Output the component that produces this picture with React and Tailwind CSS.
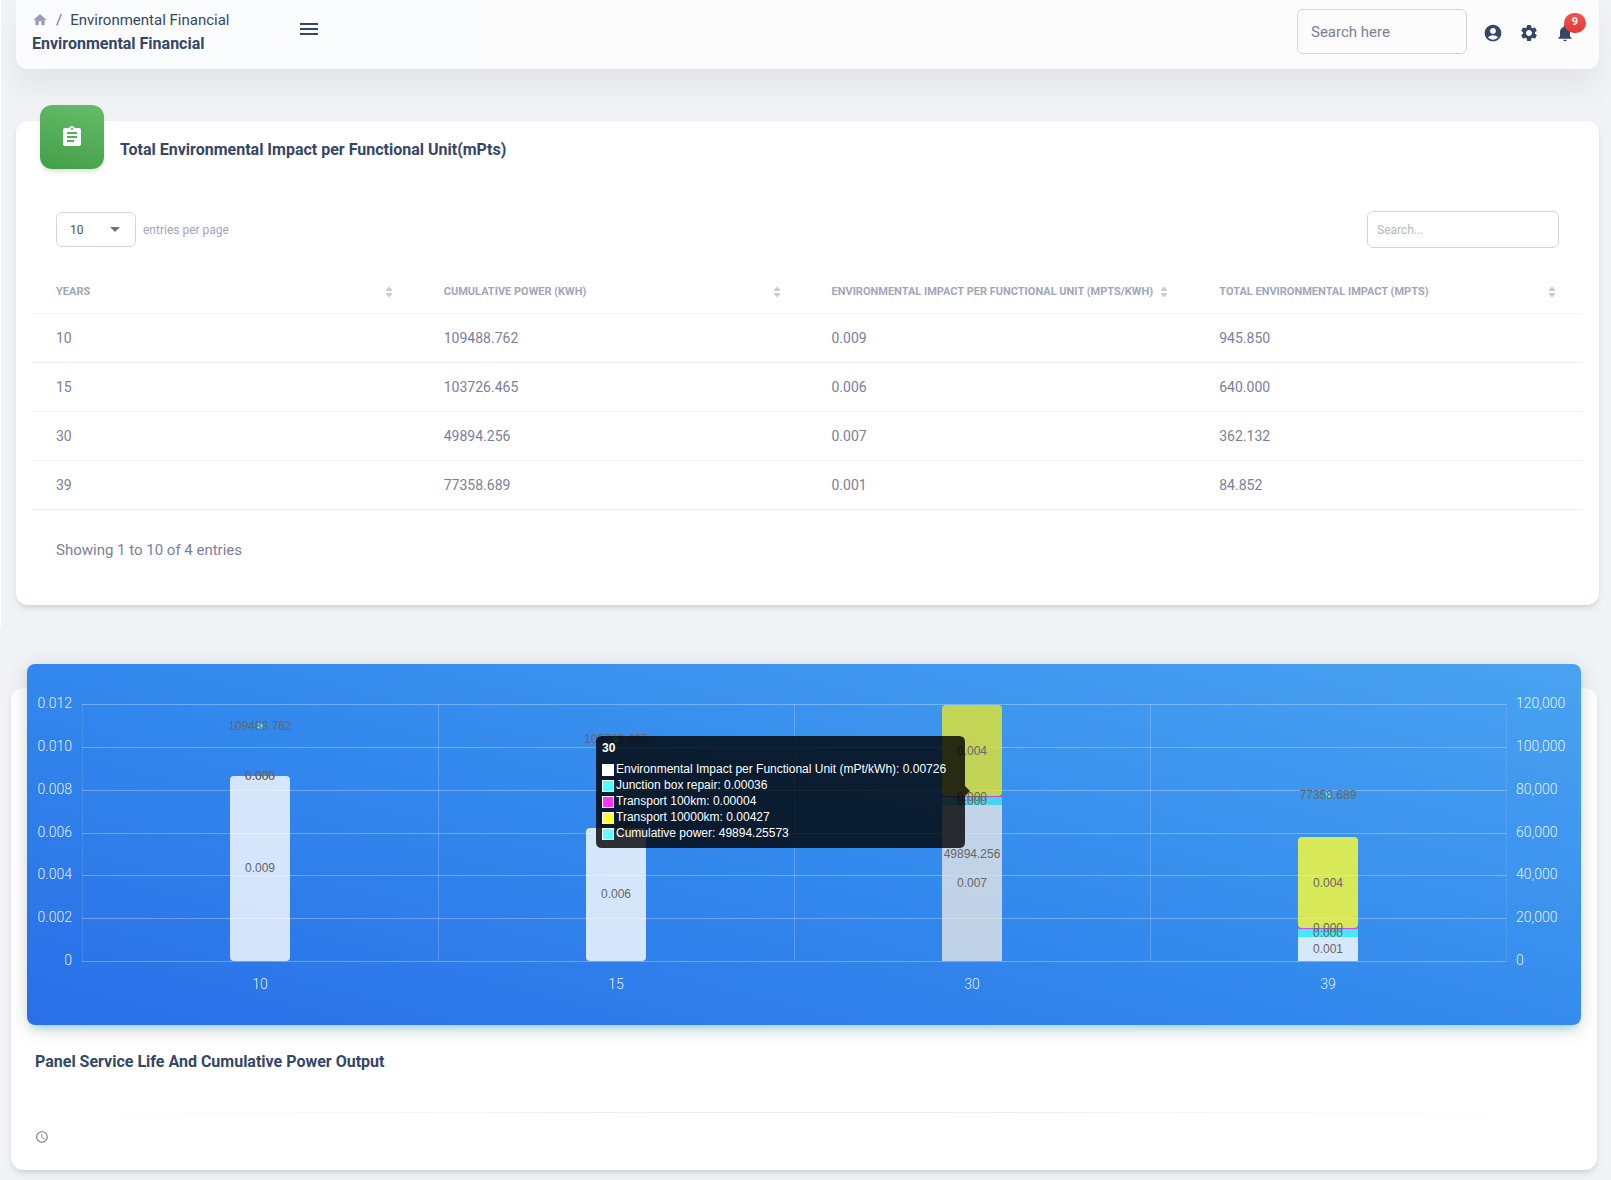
import { useState } from "react";
import {
  MdAccountCircle,
  MdAccessTime,
  MdArrowDropDown,
  MdAssignment,
  MdHome,
  MdMenu,
  MdNotifications,
  MdSettings,
} from "react-icons/md";

const columns = [
  "Years",
  "Cumulative Power (kWh)",
  "Environmental Impact per Functional Unit (mPts/kWh)",
  "Total Environmental Impact (mPts)",
];

const rows = [
  ["10", "109488.762", "0.009", "945.850"],
  ["15", "103726.465", "0.006", "640.000"],
  ["30", "49894.256", "0.007", "362.132"],
  ["39", "77358.689", "0.001", "84.852"],
];

function Navbar() {
  return (
    <header className="flex h-[69px] items-start justify-between rounded-b-xl bg-linear-to-r from-[#fafcff] via-[#fcfcfd] via-30% to-[#fcfcfc] pr-4 pl-4 shadow-[0_20px_27px_0_rgba(0,0,0,0.05)]">
      <div className="flex items-start">
        <div className="w-[265px] pt-2">
          <nav aria-label="Breadcrumb" className="flex h-6 items-center text-[15px] text-[#344767]">
            <a href="#" aria-label="Home" className="text-[#9a9fb8]">
              <MdHome size={16} />
            </a>
            <span className="mx-2 text-[#6c757d]">/</span>
            <span>Environmental Financial</span>
          </nav>
          <h1 className="text-base leading-6 font-bold text-[#344767]">
            Environmental Financial
          </h1>
        </div>
        <button type="button" aria-label="Toggle menu" className="mt-[17px] text-[#344767]">
          <MdMenu size={24} />
        </button>
      </div>
      <div className="flex items-center pt-[9px]">
        <input
          type="text"
          aria-label="Search here"
          placeholder="Search here"
          className="mr-2 h-[45px] w-[170px] rounded-md border border-[#d2d6da] bg-transparent px-[13px] text-[15px] text-[#495057] outline-none placeholder:text-[#7b809a]"
        />
        <div className="mt-0.5 flex text-[#344767]">
          <a href="#" aria-label="Account" className="p-2">
            <MdAccountCircle size={20} />
          </a>
          <button type="button" aria-label="Settings" className="p-2">
            <MdSettings size={20} />
          </button>
          <button type="button" aria-label="Notifications" className="relative p-2">
            <MdNotifications size={20} />
            <span className="absolute -top-0.5 left-[17px] flex h-5 w-[22px] items-center justify-center rounded-full bg-linear-to-b from-[#ef5350] to-[#e53935] text-[11px] font-bold text-white">
              9
            </span>
          </button>
        </div>
      </div>
    </header>
  );
}

function SortIcon() {
  return (
    <svg width="6" height="12" viewBox="0 0 6 12" fill="#c9cbd6" aria-hidden="true">
      <path d="M0 5 V4 L2.5 1 H3.5 L6 4 V5 Z" />
      <path d="M0 7 V8 L2.5 11 H3.5 L6 8 V7 Z" />
    </svg>
  );
}

function ImpactTable() {
  const [perPage, setPerPage] = useState("10");
  const [search, setSearch] = useState("");

  return (
    <section className="mt-[52px] rounded-xl bg-white px-4 pb-[45px] shadow-[0_4px_6px_-1px_rgba(0,0,0,0.1),0_2px_4px_-1px_rgba(0,0,0,0.06)]">
      <div className="flex px-2">
        <div className="-mt-4 flex size-16 items-center justify-center rounded-xl bg-linear-[195deg] from-[#66bb6a] to-[#43a047] text-white shadow-md">
          <MdAssignment size={24} />
        </div>
        <h2 className="mt-[17px] ml-4 text-base leading-6 font-bold text-[#344767]">
          Total Environmental Impact per Functional Unit(mPts)
        </h2>
      </div>
      <div className="mt-[42px] flex items-center justify-between px-6">
        <div className="flex items-center text-xs">
          <div className="relative">
            <select
              id="per-page"
              value={perPage}
              onChange={(e) => setPerPage(e.target.value)}
              className="block h-[35px] w-20 appearance-none rounded-md border border-[#d2d6da] bg-white px-[13px] text-xs text-[#495057] outline-none"
            >
              <option>5</option>
              <option>10</option>
              <option>15</option>
            </select>
            <MdArrowDropDown
              size={24}
              className="pointer-events-none absolute top-[5px] right-[9px] text-[#757575]"
            />
          </div>
          <label htmlFor="per-page" className="ml-[7px] text-[#a3a6b8]">
            entries per page
          </label>
        </div>
        <input
          type="text"
          aria-label="Search entries"
          value={search}
          onChange={(e) => setSearch(e.target.value)}
          placeholder="Search..."
          className="h-[37px] w-48 rounded-md border border-[#d2d6da] px-[9px] text-xs text-[#495057] outline-none placeholder:text-[#b4b7bb]"
        />
      </div>
      <table className="mt-[23px] w-full table-fixed border-collapse text-left text-[#7b809a]">
        <thead>
          <tr className="h-[42px] border-b border-[#f0f2f5]">
            {columns.map((name) => (
              <th key={name} className="pr-7 pl-6 text-[11px] font-bold text-[#a3a6b8] uppercase">
                <div className="flex items-center justify-between whitespace-nowrap">
                  {name}
                  <SortIcon />
                </div>
              </th>
            ))}
          </tr>
        </thead>
        <tbody className="text-sm">
          {rows.map((row) => (
            <tr key={row[0]} className="h-[49px] border-b border-[#f0f2f5]">
              {row.map((cell, i) => (
                <td key={i} className="px-6">
                  {cell}
                </td>
              ))}
            </tr>
          ))}
        </tbody>
      </table>
      <p className="mt-[30px] px-6 text-[15px] leading-5 text-[#7b809a]">
        Showing 1 to 10 of 4 entries
      </p>
    </section>
  );
}

// plot area inside the 1554 x 361 chart
const LEFT = 55;
const RIGHT = 1479;
const TOP = 40;
const BOTTOM = 297;
const STEP = (RIGHT - LEFT) / 4;

const ticks = [
  ["0.012", "120,000"],
  ["0.010", "100,000"],
  ["0.008", "80,000"],
  ["0.006", "60,000"],
  ["0.004", "40,000"],
  ["0.002", "20,000"],
  ["0", "0"],
];

const impactColor = "rgba(255,255,255,0.8)";

const bars = [
  {
    year: "10",
    parts: [{ top: 112, height: 185, fill: impactColor, r: 4 }],
    labels: [["109488.762", 62], ["0.000", 112], ["0.000", 112], ["0.009", 204]],
    point: 62,
  },
  {
    year: "15",
    parts: [{ top: 164, height: 133, fill: impactColor, r: 4 }],
    labels: [["103726.465", 75], ["0.000", 164], ["0.000", 164], ["0.006", 230]],
    point: 75,
  },
  {
    year: "30",
    parts: [
      { top: 141, height: 156, fill: "rgba(229,229,229,0.8)", r: 0 },
      { top: 133, height: 8, fill: "rgba(77,229,229,0.8)", r: 0 },
      { top: 132, height: 1, fill: "rgba(229,46,229,0.8)", r: 0 },
      { top: 41, height: 91, fill: "rgba(229,229,46,0.8)", r: 4 },
    ],
    labels: [["0.004", 87], ["0.000", 133], ["0.000", 137], ["49894.256", 190], ["0.007", 219]],
  },
  {
    year: "39",
    parts: [
      { top: 273, height: 24, fill: impactColor, r: 0 },
      { top: 265, height: 8, fill: "rgba(77,255,255,0.8)", r: 0 },
      { top: 264, height: 1, fill: "rgba(255,51,255,0.8)", r: 0 },
      { top: 173, height: 91, fill: "rgba(255,255,51,0.8)", r: 4 },
    ],
    labels: [["77358.689", 131], ["0.004", 219], ["0.000", 264], ["0.000", 269], ["0.001", 285]],
    point: 131,
  },
];

const tooltipLines = [
  ["#ffffff", "Environmental Impact per Functional Unit (mPt/kWh): 0.00726"],
  ["#4dffff", "Junction box repair: 0.00036"],
  ["#ff33ff", "Transport 100km: 0.00004"],
  ["#ffff33", "Transport 10000km: 0.00427"],
  ["#66ffff", "Cumulative power: 49894.25573"],
];

function ChartTooltip() {
  return (
    <g transform="translate(569 72)" className="font-['Liberation_Sans',sans-serif] text-[12px]">
      <path
        d="M6 0 H363 Q369 0 369 6 V50 L374 55 L369 60 V106 Q369 112 363 112 H6 Q0 112 0 106 V6 Q0 0 6 0 Z"
        fill="rgba(0,0,0,0.8)"
      />
      <text x="6" y="16" fill="#fff" className="font-bold">
        30
      </text>
      {tooltipLines.map(([color, text], i) => (
        <g key={text}>
          <rect x="6.5" y={28.5 + i * 16} width="11" height="11" fill={color} stroke="#fff" />
          <text x="20" y={37 + i * 16} fill="#fff">
            {text}
          </text>
        </g>
      ))}
    </g>
  );
}

function PowerChart() {
  return (
    <svg
      viewBox="0 0 1554 361"
      className="block h-auto w-full"
      role="img"
      aria-label="Panel service life and cumulative power output"
    >
      <g stroke="#fff" strokeOpacity="0.3">
        {ticks.map((tick, i) => {
          const y = TOP + Math.round((i * (BOTTOM - TOP)) / 6) + 0.5;
          return <line key={tick[0]} x1={LEFT} x2={RIGHT} y1={y} y2={y} />;
        })}
      </g>
      <g stroke="#fff">
        {[0, 1, 2, 3, 4].map((i) => (
          <line
            key={i}
            x1={LEFT + i * STEP + 0.5}
            x2={LEFT + i * STEP + 0.5}
            y1={TOP}
            y2={BOTTOM}
            strokeOpacity={i % 4 === 0 ? 0.1 : 0.2}
          />
        ))}
      </g>
      <g fill="#f8f9fa" fillOpacity="0.95" className="text-[14px] font-light">
        {ticks.map(([left, right], i) => {
          const y = TOP + (i * (BOTTOM - TOP)) / 6 + 4;
          return (
            <g key={left}>
              <text x="45" y={y} textAnchor="end">
                {left}
              </text>
              <text x="1489" y={y}>
                {right}
              </text>
            </g>
          );
        })}
        {bars.map((bar, i) => (
          <text key={bar.year} x={LEFT + (i + 0.5) * STEP} y="325" textAnchor="middle">
            {bar.year}
          </text>
        ))}
      </g>
      {bars.map((bar, i) => {
        const x = LEFT + (i + 0.5) * STEP;
        return (
          <g key={bar.year}>
            {bar.parts.map((part) => (
              <rect
                key={part.top}
                x={x - 30}
                y={part.top}
                width="60"
                height={part.height}
                rx={part.r}
                fill={part.fill}
              />
            ))}
            {bar.point && <circle cx={x} cy={bar.point} r="3" fill="#4dffff" fillOpacity="0.8" />}
            <g
              fill="#666"
              textAnchor="middle"
              className="font-['Liberation_Sans',sans-serif] text-[12px]"
            >
              {bar.labels.map(([text, y], n) => (
                <text key={n} x={x} y={y + 4}>
                  {text}
                </text>
              ))}
            </g>
          </g>
        );
      })}
      <ChartTooltip />
    </svg>
  );
}

function ChartCard() {
  return (
    <section className="mt-[83px] mr-0.5 -ml-[5px] flex flex-col rounded-xl bg-white px-4 pb-[26px] shadow-[0_4px_6px_-1px_rgba(0,0,0,0.1),0_2px_4px_-1px_rgba(0,0,0,0.06)]">
      <div className="-mt-6 rounded-lg bg-linear-[195deg] from-[#49a3f1] via-[#338aed] to-[#2a6fe8] shadow-[0_4px_20px_0_rgba(0,0,0,0.14),0_7px_10px_-5px_rgba(0,187,212,0.4)]">
        <PowerChart />
      </div>
      <div className="px-2 pt-[25px]">
        <h2 className="text-base leading-6 font-bold text-[#344767]">
          Panel Service Life And Cumulative Power Output
        </h2>
        <hr className="mt-[38px] h-px border-0 bg-linear-to-r from-transparent via-[#e9eaed] to-transparent" />
        <MdAccessTime size={14} className="mt-[17px] text-[#7b809a]" />
      </div>
    </section>
  );
}

function App() {
  return (
    <div className="relative min-h-screen bg-[#f0f2f5] pr-3 pb-[10px] pl-4 font-[Roboto,sans-serif]">
      {/* edge of the collapsed side menu */}
      <div className="absolute top-0 left-0 h-[627px] w-px bg-white" />
      <Navbar />
      <main>
        <ImpactTable />
        <ChartCard />
      </main>
    </div>
  );
}

export default App;
